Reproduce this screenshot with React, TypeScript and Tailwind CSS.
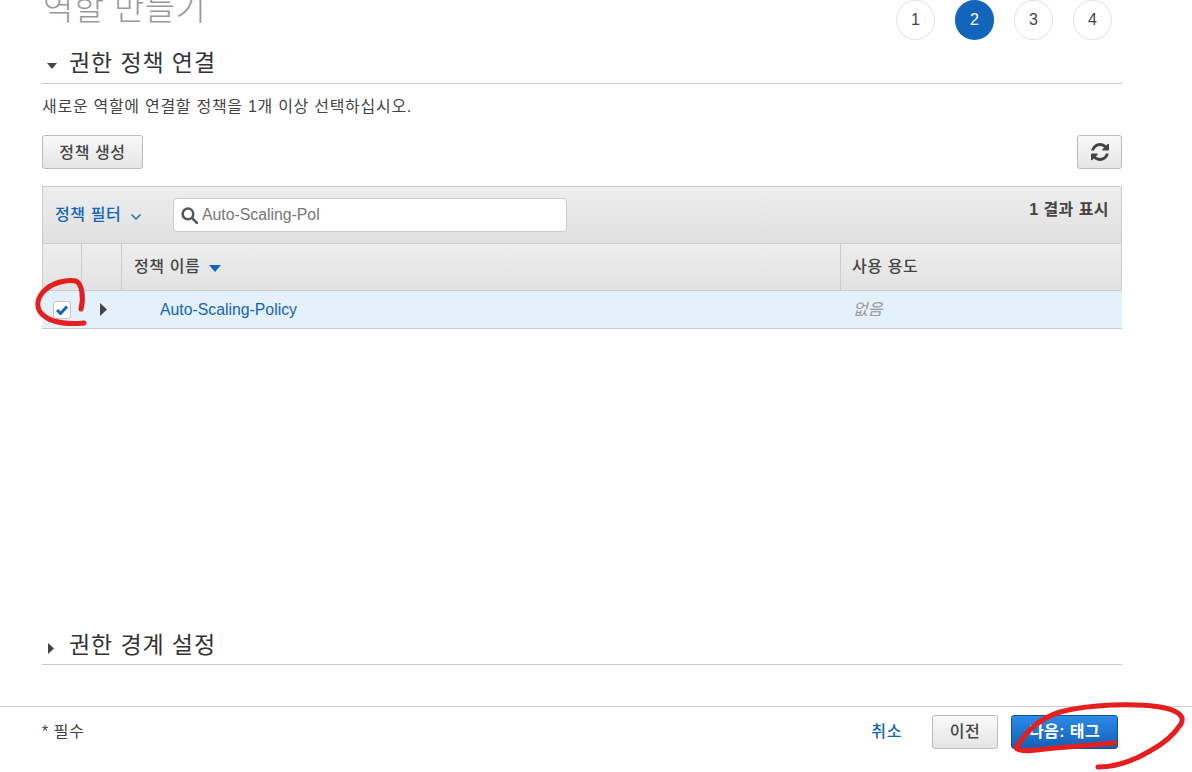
import React from "react";

const font = { fontFamily: '"Liberation Sans","Noto Sans CJK KR",sans-serif' };

function Step({ n, active }: { n: number; active?: boolean }) {
  return (
    <div
      className={
        active
          ? "flex h-[40px] w-[39px] items-center justify-center rounded-full bg-[#1166bb] text-[16px] text-white"
          : "flex h-[40px] w-[39px] items-center justify-center rounded-full border border-[#e1e1e1] bg-white text-[16px] text-[#444444]"
      }
    >
      {n}
    </div>
  );
}

export default function App() {
  return (
    <div style={font} className="relative flex h-[772px] w-[1192px] flex-col overflow-hidden bg-white text-[#444444]">
      <div className="flex flex-1 flex-col pl-[42px] pr-[70px]">
        <div className="flex h-[40px] items-start justify-between pr-[10px]">
          <div className="mt-[-13px] pl-[1px] text-[33px] font-light leading-[44px] tracking-[0.4px] text-[#999999]">역할 만들기</div>
          <div className="flex gap-[20px]">
            <Step n={1} />
            <Step n={2} active />
            <Step n={3} />
            <Step n={4} />
          </div>
        </div>

        <div className="mt-[3px] flex h-[41px] items-center border-b border-[#cccccc] pl-[5px]">
          <svg width="10" height="6" viewBox="0 0 10 6" className="mr-[12px] mt-[6px]">
            <path d="M0 0h10L5 6z" fill="#444444" />
          </svg>
          <span className="whitespace-nowrap text-[23px] leading-[30px] tracking-[0.9px] text-[#333333]">권한 정책 연결</span>
        </div>

        <p className="mt-[13px] whitespace-nowrap text-[16px] leading-[20px] tracking-[0.72px] text-[#444444]">새로운 역할에 연결할 정책을 1개 이상 선택하십시오.</p>

        <div className="mt-[18px] flex items-center justify-between">
          <button className="h-[34px] w-[101px] rounded-[3px] border border-[#bbbbbb] bg-gradient-to-b from-[#fafafa] to-[#e5e5e5] pt-[1px] text-[16px] font-medium tracking-[0.6px] text-[#444444]">
            정책 생성
          </button>
          <button className="flex h-[34px] w-[45px] items-center justify-center rounded-[3px] border border-[#bbbbbb] bg-gradient-to-b from-[#fafafa] to-[#e5e5e5]">
            <svg width="18" height="18" viewBox="0 0 1536 1536" fill="#444444">
              <path d="M1511 928q0 5-1 7-64 268-268 434.500T764 1536q-146 0-282.500-55T238 1324l-129 129q-19 19-45 19t-45-19-19-45V960q0-26 19-45t45-19h448q26 0 45 19t19 45-19 45l-137 137q71 66 161 102t187 36q134 0 250-65t186-179q11-17 53-117 8-23 30-23h192q13 0 22.500 9.500t9.500 22.500zM1536 128v448q0 26-19 45t-45 19h-448q-26 0-45-19t-19-45 19-45l138-138Q969 256 768 256q-134 0-250 65T332 500q-11 17-53 117-8 23-30 23H50q-13 0-22.500-9.500T18 608v-7q65-268 270-434.500T768 0q146 0 284 55.500T1297 212l130-129q19-19 45-19t45 19 19 45z" />
            </svg>
          </button>
        </div>

        <div className="mt-[17px]">
          <div className="flex h-[58px] items-start justify-between border border-[#cccccc] bg-gradient-to-b from-[#eeeeee] to-[#e0e0e0] pl-[12px] pr-[12px]">
            <div className="flex items-center pt-[11px]">
              <span className="w-[76px] whitespace-nowrap text-[16px] font-medium leading-[34px] tracking-[0.6px] text-[#1166bb]">
                정책 필터
              </span>
              <svg width="10" height="6" viewBox="0 0 10 6" fill="none" stroke="#1166bb" strokeWidth="1.3" className="mt-[3px]">
                <path d="M0.500 0.500 5 5 9.500 0.500" />
              </svg>
              <div className="ml-[32px] flex h-[34px] w-[394px] items-center rounded-[4px] border border-[#cccccc] bg-white pl-[7px] text-[15.800px] text-[#777777]">
                <svg width="17" height="17" viewBox="0 0 16 16" fill="none" stroke="#555555" strokeWidth="2.400" className="mr-[4px]">
                  <circle cx="6.500" cy="6.500" r="5" />
                  <path d="M10.500 10.500 15 15" strokeLinecap="round" />
                </svg>
                Auto-Scaling-Pol
              </div>
            </div>
            <span className="whitespace-nowrap pt-[12px] text-[16px] font-bold leading-[22px] tracking-[0.45px] text-[#444444]">1 결과 표시</span>
          </div>

          <div className="flex h-[46px] border-x border-[#cccccc] bg-gradient-to-b from-[#eeeeee] to-[#e2e2e2] text-[16px] font-medium tracking-[0.6px] text-[#444444]">
            <div className="w-[39px] border-r border-[#cccccc]" />
            <div className="w-[40px] border-r border-[#cccccc]" />
            <div className="flex w-[719px] items-center border-r border-[#cccccc] pl-[12px]">
              정책 이름
              <svg width="12" height="7" viewBox="0 0 12 7" className="ml-[9px] mt-[3px]">
                <path d="M0 0h12L6 7z" fill="#1166bb" />
              </svg>
            </div>
            <div className="flex flex-1 items-center pl-[11px]">사용 용도</div>
          </div>

          <div className="flex h-[39px] items-center border-y border-[#cccccc] bg-[#e4f0fc]">
            <div className="flex w-[40px] justify-center">
              <div className="flex h-[18px] w-[18px] items-center justify-center rounded-[3px] border border-[#c4c4c4] bg-white">
                <svg width="12" height="10" viewBox="0 0 12 10" fill="none" stroke="#1166bb" strokeWidth="3">
                  <path d="M1 5 4.500 8.500 11 1.500" />
                </svg>
              </div>
            </div>
            <div className="flex w-[40px] justify-center pl-[3px]">
              <svg width="7" height="13" viewBox="0 0 7 13">
                <path d="M0 0v13l7-6.500z" fill="#444444" />
              </svg>
            </div>
            <div className="w-[720px] pl-[38px] text-[15.800px] text-[#1166bb]">Auto-Scaling-Policy</div>
            <div className="pl-[11px] text-[16px] italic text-[#999999]">없음</div>
          </div>
        </div>

        <div className="flex-1" />

        <div className="flex h-[42px] items-center border-b border-[#cccccc] pl-[6px] pt-[3px]">
          <svg width="6" height="11" viewBox="0 0 6 11" className="mr-[15px] mt-[6px]">
            <path d="M0 0v11l6-5.500z" fill="#444444" />
          </svg>
          <span className="whitespace-nowrap text-[23px] leading-[30px] tracking-[0.9px] text-[#333333]">권한 경계 설정</span>
        </div>
        <div className="h-[41px]" />
      </div>

      <div className="flex h-[66px] items-start justify-between border-t border-[#cccccc] pl-[42px] pr-[74px] pt-[8px]">
        <span className="text-[16px] leading-[34px] tracking-[0.6px] text-[#444444]">* 필수</span>
        <div className="flex items-center">
          <span className="mr-[30px] text-[16px] font-medium tracking-[0.6px] text-[#1166bb]">취소</span>
          <button className="h-[34px] w-[66px] rounded-[3px] border border-[#bbbbbb] bg-gradient-to-b from-[#fafafa] to-[#e5e5e5] text-[16px] font-medium tracking-[0.6px] text-[#444444]">
            이전
          </button>
          <button className="ml-[13px] h-[34px] w-[107px] rounded-[3px] border border-[#15508f] bg-gradient-to-b from-[#2b8be8] to-[#1261b5] text-[16px] font-bold tracking-[0.4px] text-white">
            다음: 태그
          </button>
        </div>
      </div>

      <svg className="pointer-events-none absolute left-0 top-0" width="1192" height="772" fill="none" stroke="#e51f1f" strokeWidth="5" strokeLinecap="round" strokeLinejoin="round">
        <path d="M81 309C84 298 82 284 76 281 66 279 52 283 44 291 37 298 36 307 41 313 49 322 62 325 84 323" />
        <path d="M1115 743C1090 745 1065 747 1045 749 1030 751 1020 752 1016 748 1026 732 1038 719 1060 712 1090 704 1135 703 1160 707 1178 710 1185 716 1181 724 1175 733 1165 743 1150 751 1135 760 1118 767 1098 767" />
      </svg>
    </div>
  );
}
